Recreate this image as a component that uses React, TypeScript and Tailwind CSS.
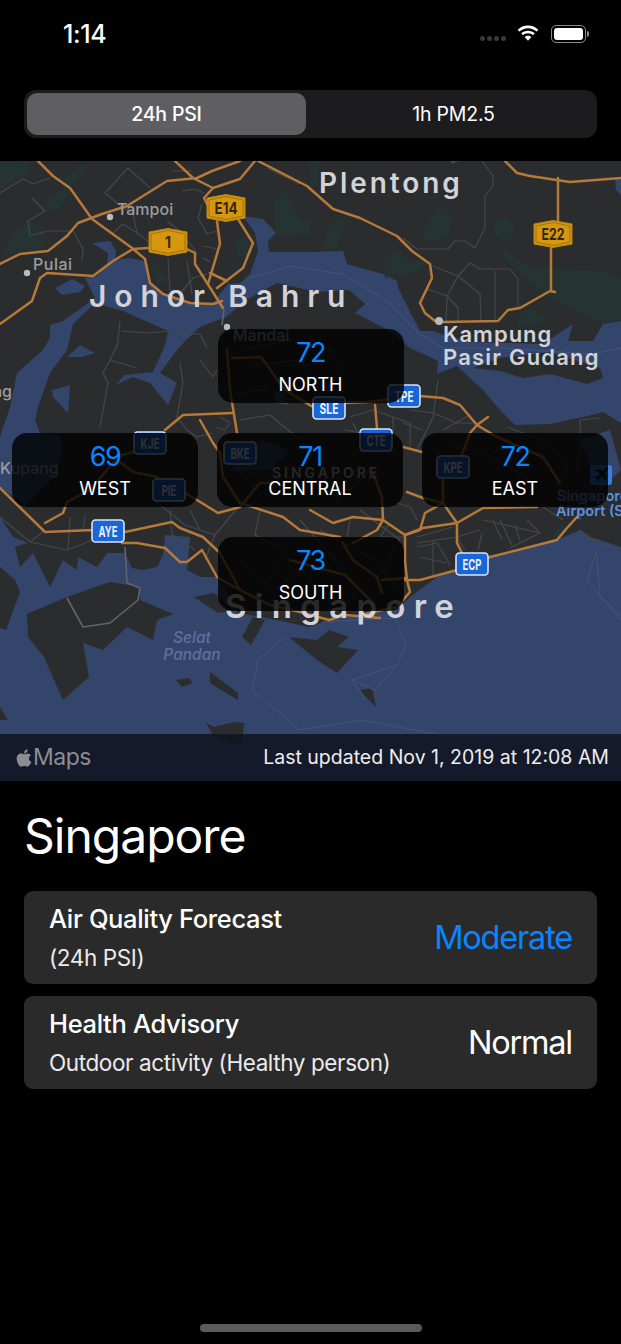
import { FaApple } from 'react-icons/fa';

const sans = 'font-[Inter,"Noto_Sans",sans-serif]';

// land outlines, in page pixels (the map's viewBox starts at y=161)
const land = [
  // Johor side
  '0,161 621,161 621,321 603,324 593,341 568,341 573,324 543,344 510,343 470,342 443,335 433,331 420,331 398,288 397,281 383,274 347,264 343,251 310,252 269,252 268,241 276,233 263,219 243,216 255,233 258,251 250,274 240,283 228,284 220,294 213,304 187,303 160,293 150,281 145,261 130,258 115,260 116,251 110,241 92,243 108,253 107,264 97,276 85,278 95,298 87,304 57,325 43,350 17,373 10,407 0,437',
  // Singapore main island
  '95,303 73,324 67,350 50,373 38,407 35,420 40,433 60,435 62,450 58,473 25,505 0,487 0,517 13,537 28,543 15,547 20,567 33,553 50,587 63,560 77,570 78,557 97,567 107,553 125,553 132,568 143,570 157,567 167,547 178,545 187,570 200,577 217,577 238,613 277,620 309,627 329,620 360,615 397,610 410,597 437,577 457,570 490,557 510,553 557,540 580,530 590,537 600,540 621,547 621,423 603,412 583,417 550,424 515,425 500,410 483,390 473,381 457,366 437,374 438,361 410,348 390,331 355,313 365,304 349,290 317,292 277,283 246,300 226,317 200,327 185,341 168,331 123,311',
  // Pulau Ubin
  '473,368 500,358 550,352 600,368 603,378 587,384 550,374 523,378 500,371',
  // Jurong
  '27,614 67,597 110,582 140,587 140,600 173,614 157,620 153,640 127,627 103,650 83,643 89,677 63,700 44,657 28,637',
  '194,597 214,593 234,610 218,613',
  '242,637 253,617 265,620 251,645',
  '289,637 317,640 329,630 349,637 337,647 358,650 349,660 337,673 317,660',
  '176,680 190,678 192,683 182,687',
  '210,672 238,693 238,700 226,693 210,683',
  '206,723 214,727 234,722 244,723 242,743 230,743 214,737',
  '360,690 372,688 376,707 366,697',
  '0,707 8,720 0,720',
  '0,567 15,580 20,592 6,630 0,628',
];

const inlandWater = [
  '52,390 70,385 68,413 53,397',
  '168,331 185,341 177,350 160,373 177,383 168,405 150,383 133,377 115,385 125,375 153,372 165,345',
  '50,325 63,321 57,331 63,333 60,340 50,343',
  '67,357 80,345 95,353 82,357',
  '165,535 190,537 187,570 163,557',
  '273,390 284,392 288,405 276,403',
  '48,281 55,288 72,279 85,286 80,292 62,295',
  '450,161 460,161 452,164',
  '615,180 621,178 621,195 616,190',
  '230,470 262,440 290,450 270,470',
  '580,440 610,430 621,470 600,490',
];

const parks = [
  '0,161 28,161 30,172 0,190',
  '0,258 10,236 28,221 43,228 45,241 40,251 17,252',
  '47,198 65,188 73,188 57,211 47,211',
  '65,177 83,165 88,167 73,184 62,188',
  '273,201 285,191 298,218 310,219 310,235 277,236',
  '235,241 250,235 250,255 237,258',
  '150,261 170,281 157,284',
  '437,206 453,213 450,238 423,241 425,228',
  '493,223 507,218 517,226 507,244 495,234',
  '385,258 400,249 407,261 423,261 428,264 403,278 397,274 385,278',
  '327,229 347,214 337,248 323,248',
  '497,251 507,251 523,264 550,268 600,271 621,278 621,321 603,324 550,298 510,264',
  '517,318 530,308 550,321 517,328',
  '310,161 320,161 317,185 310,185',
  '552,538 560,525 568,526 562,538',
];

const minorRoads = [
  // Johor
  '0,193 23,179 33,184 50,178',
  '32,198 45,211 28,221 30,236',
  '30,236 47,231 73,231 83,249 82,261',
  '105,193 128,168 150,188',
  '105,193 117,203 133,214 137,233 148,241',
  '113,233 123,224 137,233',
  '182,191 195,189 204,193',
  '167,221 180,231 197,253',
  '202,204 198,218 207,234 217,231',
  '203,246 218,249 213,268',
  '203,258 210,262',
  '168,258 170,291',
  '187,261 192,294',
  '180,294 193,278 207,274',
  '172,171 192,171',
  '267,168 300,184',
  '482,161 493,176 493,186 485,196 485,228 475,248 465,241 455,241 448,249 417,249 403,238',
  '433,266 458,276 470,263 480,269 510,269 518,279 518,308',
  '458,276 480,294 481,321',
  '458,276 447,296 446,321',
  '427,289 447,296 458,308 458,321',
  '495,271 495,321',
  // Singapore north and west
  '122,331 147,333 170,331 190,334 200,334 207,348',
  '120,321 117,348',
  '118,343 110,360 103,373 108,383 100,427',
  '110,360 137,368',
  '180,363 183,383 177,417 187,430 197,437 213,433',
  '200,360 213,377 217,370',
  '220,417 230,423 225,430 215,427',
  '0,517 30,542 43,532',
  '30,542 67,550 93,540',
  '70,517 68,550',
  '85,515 83,530',
  '150,497 185,525 215,535 240,505',
  '170,510 172,535 195,550',
  '215,535 205,560',
  '190,510 200,530',
  '230,460 245,478 260,470',
  '240,350 290,340 330,350 345,375',
  '250,365 300,360 330,395',
  '235,395 262,390 300,402',
  '240,420 270,415 300,440',
  // central, under the boxes
  '260,510 255,535 285,550 270,580',
  '300,520 335,560 360,590 340,610',
  '240,560 275,590 300,570 320,590 300,610',
  '320,530 375,560 400,590',
  '360,510 400,540 380,575',
  '290,480 350,490 370,470',
  '320,470 340,505',
  '240,470 280,480',
  '350,417 373,410 410,423 410,447',
  '353,423 360,437',
  '393,417 393,433',
  '403,423 423,430',
  '410,410 433,413 457,423 473,423',
  '438,380 433,417 417,450',
  '443,430 470,415',
  '345,430 373,435',
  // east
  '397,503 410,507 417,520',
  '350,520 347,537',
  '390,523 380,537 403,537',
  '417,543 457,537 480,530',
  '417,537 453,527',
  '417,547 437,543 450,565',
  '420,557 447,563',
  '433,540 433,577',
  '457,537 465,550',
  '483,520 540,533',
  '493,520 502,540',
  '527,520 540,533 510,548',
  '482,533 478,550',
  '500,520 512,545',
  '515,525 520,540',
  '507,427 540,440 570,463 557,487 580,503 580,520',
  '543,507 563,520',
  '580,420 581,450 576,470',
  '580,420 600,418',
  '580,530 597,543 621,550',
  '450,445 490,455 530,480',
];

// the few grey roads that stand out more than the rest
const greyRoads = [
  '125,547 127,583 140,588 138,600 110,623 83,627 67,598',
  '224,310 222,325',
];

const seaLines = [
  '285,637 258,660 252,690 300,730 362,720 440,735 621,735',
  '322,622 395,618 406,645 397,665 352,680 365,700',
  '352,680 375,690 397,665',
  '597,550 587,580 621,620',
  '597,557 600,597 621,615',
  '250,278 290,266 310,269 343,274 387,301 420,334 443,348 500,348 593,354 621,348',
];

const majorRoads = [
  '38,161 53,176 70,188 92,219 132,248 145,259 150,283 163,294 190,303 213,304 222,301',
  '0,264 20,254 48,251 67,236 78,223 102,214 127,206 167,181 197,178 212,171 240,161',
  '175,161 193,178 213,188 240,179 255,161',
  '213,188 204,198 208,206',
  '217,221 220,244 208,284',
  '238,219 253,243 243,268 217,288',
  '210,273 227,281',
  '187,249 195,253 195,264 223,308',
  '148,248 133,249 113,261 93,276 47,273 40,278 32,301 0,324',
  '258,161 307,186 333,209 360,218 397,236 412,251 430,264 432,278 420,303 425,313 435,321',
  '443,322 498,321 508,310 520,308 550,291 555,292',
  '505,161 517,173 530,176 570,182 621,178',
  '558,178 558,221',
  '551,248 551,291',
  // Singapore
  '227,350 230,390 237,433',
  '165,430 183,415 233,413',
  '200,420 213,443 220,453 223,477 240,503',
  '133,452 122,455 113,463 90,490 67,502 63,513 45,523',
  '120,462 133,472 157,477 197,500 218,513 240,507 260,483 277,483',
  '240,503 283,517 300,530 340,537',
  '0,488 45,532 93,530 125,532 172,522 180,528 203,537 220,553 240,590',
  '122,543 137,543 165,548 180,562 187,562 202,550 217,577 240,590 270,605 300,612 329,620 345,615 380,618',
  '232,358 261,357 285,390 313,407 345,403 367,402 420,396 443,398 460,405 477,425 488,417',
  '477,425 470,433 460,460',
  '477,425 497,437 543,457 560,483',
  '375,405 377,428',
  '403,447 422,452',
  '373,473 382,497 383,520',
  '310,510 333,523 353,517 383,520 405,535 423,528 457,523 483,508 537,507',
  '407,492 423,498 443,503 457,523 457,543 462,553',
  '443,503 425,513 420,530 405,535',
  '443,503 443,480',
  '383,520 377,530 353,543',
  '405,535 405,560 407,580 410,592 397,607 360,615',
  '420,580 457,570 490,557 557,540 567,528 577,517',
  '405,580 420,580',
  '343,543 353,560 377,577 382,593',
  '382,580 405,578',
  '290,560 345,575 370,600',
];

const badges = [
  { x: 329, y: 408, t: 'SLE' },
  { x: 404, y: 396, t: 'TPE' },
  { x: 150, y: 443, t: 'KJE' },
  { x: 240, y: 453, t: 'BKE' },
  { x: 376, y: 440, t: 'CTE' },
  { x: 453, y: 467, t: 'KPE' },
  { x: 169, y: 490, t: 'PIE', w: 15 },
  { x: 108, y: 531, t: 'AYE' },
  { x: 472, y: 564, t: 'ECP' },
];

const shields = [
  { x: 226, y: 208, t: 'E14', w: 23 },
  { x: 168, y: 242, t: '1', w: 6 },
  { x: 553, y: 234, t: 'E22', w: 23 },
];

function hexPoints(x: number, y: number, w: number, h: number) {
  return `${x - w},${y - h + 3.5} ${x},${y - h} ${x + w},${y - h + 3.5} ${x + w},${y + h - 3.5} ${x},${y + h} ${x - w},${y + h - 3.5}`;
}

function MapDrawing() {
  return (
    <svg viewBox="0 161 621 620" className="absolute inset-0 h-full w-full" fontFamily="Inter, sans-serif">
      <rect x="0" y="161" width="621" height="620" fill="#33456b" />
      {land.map((p, i) => (
        <polygon key={i} points={p} fill="#2b2c2e" />
      ))}
      {parks.map((p, i) => (
        <polygon key={i} points={p} fill="#253432" />
      ))}
      {inlandWater.map((p, i) => (
        <polygon key={i} points={p} fill="#33456b" />
      ))}
      <g fill="none" stroke="#42547c" strokeWidth="1">
        {seaLines.map((p, i) => (
          <polyline key={i} points={p} />
        ))}
      </g>
      <g fill="none" stroke="#46474b" strokeWidth="1.2" strokeLinejoin="round">
        {minorRoads.map((p, i) => (
          <polyline key={i} points={p} />
        ))}
      </g>
      <g fill="none" stroke="#636468" strokeWidth="1.6" strokeLinejoin="round">
        {greyRoads.map((p, i) => (
          <polyline key={i} points={p} />
        ))}
      </g>
      <g fill="none" stroke="#b5793a" strokeWidth="2.5" strokeLinejoin="round" strokeLinecap="round">
        {majorRoads.map((p, i) => (
          <polyline key={i} points={p} />
        ))}
      </g>

      {shields.map((s) => (
        <g key={s.t}>
          <polygon points={hexPoints(s.x, s.y, 19, 13.5)} fill="#d6970f" stroke="#b98412" strokeWidth="1" strokeLinejoin="round" />
          <polygon points={hexPoints(s.x, s.y, 17, 11.5)} fill="none" stroke="#8f6a14" strokeWidth="0.8" strokeLinejoin="round" />
          <text x={s.x} y={s.y + 6} textAnchor="middle" fontSize="15.5" fontWeight="700" fill="#33260a" textLength={s.w} lengthAdjust="spacingAndGlyphs">
            {s.t}
          </text>
        </g>
      ))}
      {badges.map((b) => (
        <g key={b.t}>
          <rect x={b.x - 16} y={b.y - 11} width="32" height="22" rx="3.5" fill="#1b66d6" stroke="#d7e4fb" strokeWidth="1.6" />
          <text x={b.x} y={b.y + 6} textAnchor="middle" fontSize="15" fontWeight="700" fill="#e8f0ff" textLength={b.w ?? 19} lengthAdjust="spacingAndGlyphs">
            {b.t}
          </text>
        </g>
      ))}
      {/* airport pin */}
      <rect x="590" y="465" width="22" height="20" rx="3" fill="#3a7fe0" />
      <path d="M608 469l-3 3 1.5 7-1.5 1.5-3-5-3 3 .5 2-1 1-1.5-3-3-1.5 1-1 2 .5 3-3-5-3 1.5-1.5 7 1.5 3-3c1-1 2.5-.5 1.5.5z" fill="#10151f" />

      <g fill="#b9babe">
        <circle cx="110" cy="217" r="3.2" />
        <circle cx="27" cy="273" r="3.2" />
        <circle cx="227" cy="327" r="3.2" />
        <circle cx="439" cy="321" r="4" />
      </g>
      <g fontWeight="600" fill="#d2d3d8">
        <text x="319" y="193" fontSize="28" letterSpacing="2.9">Plentong</text>
        <text x="89" y="307" fontSize="30" letterSpacing="7.9">Johor Bahru</text>
        <text x="443" y="342" fontSize="22" letterSpacing="1">Kampung</text>
        <text x="443" y="365" fontSize="22" letterSpacing="1.2">Pasir Gudang</text>
        <text x="225" y="618" fontSize="33" letterSpacing="8.3">Singapore</text>
      </g>
      <g fontWeight="500" fill="#9c9da1" fontSize="16">
        <text x="117" y="215">Tampoi</text>
        <text x="33" y="270" letterSpacing="0.5">Pulai</text>
        <text x="233" y="341">Mandai</text>
        <text x="-27" y="397">Yong</text>
        <text x="0" y="474">Kupang</text>
      </g>
      <text x="272" y="478" fontSize="14" fontWeight="600" letterSpacing="3" fill="#b9babe">SINGAPORE</text>
      <g fontWeight="500" fill="#5e6f9f" fontSize="15.5" fontStyle="italic" textAnchor="middle">
        <text x="192" y="643">Selat</text>
        <text x="192" y="660">Pandan</text>
      </g>
      <g fontWeight="600" fill="#5b93e0" fontSize="14.5">
        <text x="557" y="501">Singapore C</text>
        <text x="556" y="516">Airport (S</text>
      </g>
    </svg>
  );
}

function RegionBox({ value, name }: { value: number; name: string }) {
  return (
    <div className="flex h-[74px] w-[186px] flex-col items-center rounded-[15px] bg-black/80 pt-[8px] text-center">
      <div className="text-[27px] leading-[32px] tracking-[-1.5px] text-[#0a84ff]">{value}</div>
      <div className="mt-[2px] text-[18px] leading-[28px] text-white">{name}</div>
    </div>
  );
}

function InfoCard({ title, sub, value, valueClass }: { title: string; sub: string; value: string; valueClass: string }) {
  return (
    <div className="flex h-[93px] items-center justify-between rounded-[9px] bg-[#2a2a2b] pl-[25px] pr-[25px]">
      <div>
        <div className="text-[25.5px] font-medium leading-[31px] tracking-[-0.35px] text-white">{title}</div>
        <div className="mt-[9px] text-[22.5px] leading-[30px] tracking-[-0.4px] text-[#ebebeb]">{sub}</div>
      </div>
      <div className={`pt-[2px] text-[32.5px] tracking-[-1.2px] ${valueClass}`}>{value}</div>
    </div>
  );
}

export default function App() {
  return (
    <div className={`flex h-[1344px] w-[621px] flex-col overflow-hidden bg-black text-white ${sans}`}>
      {/* Status bar */}
      <div className="flex h-[90px] items-start justify-between pl-[63px] pr-[32px] pt-[19px]">
        <span className="text-[25px] font-medium leading-[30px] tracking-[-0.4px]">1:14</span>
        <div className="flex items-center pt-[6px]">
          <div className="mt-[8px] flex gap-[2px]">
            <span className="h-[5px] w-[5px] rounded-full bg-[#3a3a3c]" />
            <span className="h-[5px] w-[5px] rounded-full bg-[#3a3a3c]" />
            <span className="h-[5px] w-[5px] rounded-full bg-[#3a3a3c]" />
            <span className="h-[5px] w-[5px] rounded-full bg-[#3a3a3c]" />
          </div>
          <svg viewBox="0 0 24 18" className="ml-[10px] h-[18px] w-[24px]" fill="white">
            <path d="M12 3.2c3.3 0 6.3 1.3 8.6 3.4l1.7-1.9C19.6 2.2 16 .6 12 .6S4.4 2.2 1.7 4.7l1.7 1.9C5.7 4.5 8.7 3.2 12 3.2z" />
            <path d="M12 8.3c1.9 0 3.7.7 5 1.9l1.8-1.9C17 6.7 14.6 5.7 12 5.700s-5 1-6.800 2.600L7 10.200c1.300-1.200 3.100-1.900 5-1.900z" />
            <path d="M12 10.800c-1.300 0-2.500.5-3.300 1.300L12 15.800l3.300-3.700c-.8-.8-2-1.300-3.300-1.300z" />
          </svg>
          <div className="ml-[11px] flex items-center">
            <div className="flex h-[18px] w-[35px] items-center rounded-[5px] border border-[#8a8a8a] p-[2px]">
              <div className="h-full w-full rounded-[3px] bg-white" />
            </div>
            <div className="ml-[1px] h-[6px] w-[2px] rounded-r-sm bg-[#8a8a8a]" />
          </div>
        </div>
      </div>

      {/* Segmented control */}
      <div className="mx-[24px] flex h-[48px] rounded-[12px] bg-[#1c1c1e] p-[3px] text-[19.5px] tracking-[-0.2px]">
        <div className="flex w-[279px] items-center justify-center rounded-[10px] bg-[#5f5f63] pt-[2px] font-medium">24h PSI</div>
        <div className="flex flex-1 items-center justify-center pl-[7px] pt-[2px]">1h PM2.5</div>
      </div>

      {/* Map */}
      <div className="relative mt-[23px] h-[620px] shrink-0 overflow-hidden">
        <MapDrawing />
        <div className="absolute inset-x-0 top-[168px] flex flex-col gap-[30px]">
          <div className="flex justify-center">
            <RegionBox value={72} name="NORTH" />
          </div>
          <div className="flex justify-between pl-[12px] pr-[13px]">
            <RegionBox value={69} name="WEST" />
            <RegionBox value={71} name="CENTRAL" />
            <RegionBox value={72} name="EAST" />
          </div>
          <div className="flex justify-center">
            <RegionBox value={73} name="SOUTH" />
          </div>
        </div>
        <div className="absolute inset-x-0 bottom-0 flex h-[47px] items-center justify-between bg-[#10131f]/85 pl-[15px] pr-[12px]">
          <div className="flex items-center text-[#8c8d90]">
            <FaApple className="h-[20px] w-[18px]" />
            <span className="text-[23px] leading-none tracking-[-0.5px]">Maps</span>
          </div>
          <span className="pt-[1px] text-[19.5px] text-[#ededed]">Last updated Nov 1, 2019 at 12:08 AM</span>
        </div>
      </div>

      {/* Details */}
      <div className="flex flex-col px-[24px]">
        <h1 className="mt-[24px] text-[48px] leading-[62px] tracking-[-1px]">Singapore</h1>
        <div className="mt-[24px] flex flex-col gap-[12px]">
          <InfoCard title="Air Quality Forecast" sub="(24h PSI)" value="Moderate" valueClass="text-[#0a84ff]" />
          <InfoCard title="Health Advisory" sub="Outdoor activity (Healthy person)" value="Normal" valueClass="text-white" />
        </div>
      </div>

      {/* Home indicator */}
      <div className="mt-auto flex justify-center pb-[12px]">
        <div className="h-[8px] w-[222px] rounded-full bg-[#5a5a5d]" />
      </div>
    </div>
  );
}
